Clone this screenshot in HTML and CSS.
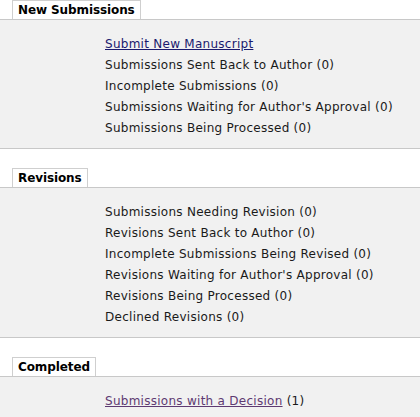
FILE: index.html
```html
<!DOCTYPE html>
<html>
<head>
<meta charset="utf-8">
<link rel="stylesheet" href="styles.css">
</head>
<body>
<div class="section">
  <div class="head"><span class="tab">New Submissions</span></div>
  <ul class="list">
    <li><a class="link" href="#">Submit New Manuscript</a></li>
    <li>Submissions Sent Back to Author (0)</li>
    <li>Incomplete Submissions (0)</li>
    <li>Submissions Waiting for Author's Approval (0)</li>
    <li>Submissions Being Processed (0)</li>
  </ul>
</div>
<div class="section">
  <div class="head"><span class="tab">Revisions</span></div>
  <ul class="list">
    <li>Submissions Needing Revision (0)</li>
    <li>Revisions Sent Back to Author (0)</li>
    <li>Incomplete Submissions Being Revised (0)</li>
    <li>Revisions Waiting for Author's Approval (0)</li>
    <li>Revisions Being Processed (0)</li>
    <li>Declined Revisions (0)</li>
  </ul>
</div>
<div class="section">
  <div class="head"><span class="tab">Completed</span></div>
  <ul class="list">
    <li><a class="link visited" href="#">Submissions with a Decision</a> (1)</li>
  </ul>
</div>
</body>
</html>
```
FILE: styles.css
```css
html, body {
  margin: 0;
  padding: 0;
  background: #ffffff;
}
body {
  font-family: "DejaVu Sans", Verdana, sans-serif;
  font-size: 12px;
  color: #1a1a1a;
}
.section {
  margin-bottom: 19px;
}
.head {
  height: 19px;
  border-bottom: 1px solid #c8c8c8;
  padding-left: 12px;
  display: flex;
  align-items: flex-end;
}
.tab {
  display: block;
  height: 19px;
  box-sizing: border-box;
  border: 1px solid #cfcfcf;
  border-bottom: none;
  background: #ffffff;
  padding: 0 5px;
  font-weight: bold;
  line-height: 18px;
  letter-spacing: -0.1px;
  color: #000;
}
.list {
  list-style: none;
  margin: 0;
  padding: 14px 0 9px 105px;
  background: #f1f1f1;
  border-bottom: 1px solid #c8c8c8;
  line-height: 21px;
  letter-spacing: 0.27px;
}
.link {
  color: #1a1a6e;
  text-decoration: underline;
}
.link.visited {
  color: #5e3a72;
}
```
